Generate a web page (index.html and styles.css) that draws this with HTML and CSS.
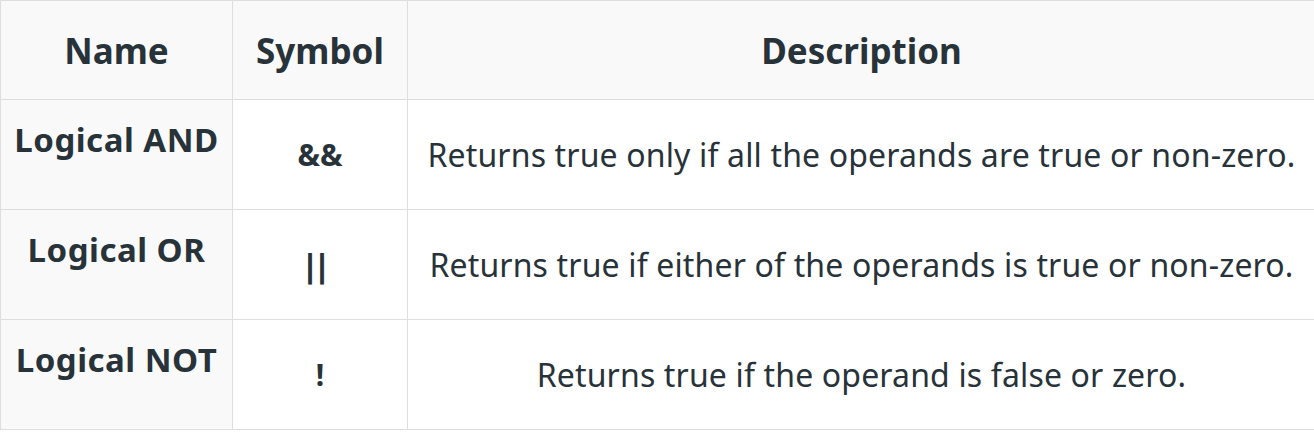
FILE: index.html
```html
<!DOCTYPE html>
<html>
<head>
<meta charset="utf-8">
<link rel="stylesheet" href="styles.css">
</head>
<body>
<table class="ops">
  <colgroup>
    <col class="c-name">
    <col class="c-sym">
    <col class="c-desc">
  </colgroup>
  <thead>
    <tr class="head">
      <th>Name</th>
      <th>Symbol</th>
      <th>Description</th>
    </tr>
  </thead>
  <tbody>
    <tr>
      <th class="name"><span class="lift">Logical AND</span></th>
      <td class="sym">&amp;&amp;</td>
      <td class="desc">Returns true only if all the operands are true or non-zero.</td>
    </tr>
    <tr>
      <th class="name"><span class="lift">Logical OR</span></th>
      <td class="sym"><span class="bars">||</span></td>
      <td class="desc">Returns true if either of the operands is true or non-zero.</td>
    </tr>
    <tr>
      <th class="name"><span class="lift">Logical NOT</span></th>
      <td class="sym">!</td>
      <td class="desc">Returns true if the operand is false or zero.</td>
    </tr>
  </tbody>
</table>
</body>
</html>
```

FILE: styles.css
```css
html, body {
  margin: 0;
  padding: 0;
  background: #ffffff;
}
body {
  font-family: "Noto Sans", "Open Sans", sans-serif;
  color: #273239;
  overflow: hidden;
}
.ops {
  border-collapse: collapse;
  table-layout: fixed;
  width: 1316px;
}
.c-name { width: 232px; }
.c-sym { width: 175px; }
.ops th, .ops td {
  border: 1px solid #dedede;
  text-align: center;
  vertical-align: middle;
  padding: 0;
}
.head th {
  height: 98px;
  background: #f9f9f9;
  font-size: 35px;
  font-weight: 700;
}
tbody tr {
  height: 110px;
}
.name {
  background: #f9f9f9;
  font-size: 33px;
  font-weight: 700;
  letter-spacing: 0.5px;
  white-space: nowrap;
}
.lift {
  display: block;
  margin-bottom: 30px;
}
.sym {
  font-size: 30px;
  font-weight: 700;
}
.bars {
  display: inline-block;
  font-size: 32px;
  font-weight: 800;
  letter-spacing: -5px;
  padding-right: 5px;
  margin-left: -8px;
}
.desc {
  font-size: 32px;
  font-weight: 400;
  letter-spacing: 0.15px;
  white-space: nowrap;
}
```
